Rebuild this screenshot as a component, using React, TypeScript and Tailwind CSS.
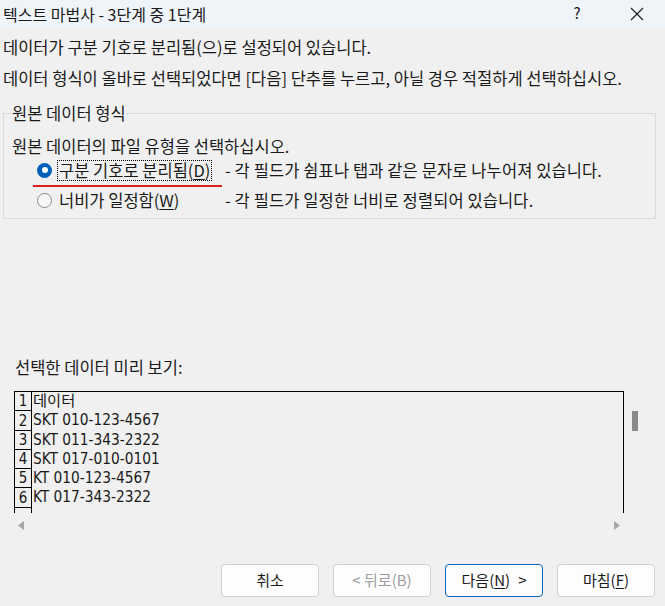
import React from 'react';

const ui = { fontFamily: '"Noto Sans CJK KR", "Noto Sans", sans-serif' };
const mono = { fontFamily: '"DejaVu Sans", "Noto Sans CJK KR", sans-serif' };

const rows = ['데이터', 'SKT 010-123-4567', 'SKT 011-343-2322', 'SKT 017-010-0101', 'KT 010-123-4567', 'KT 017-343-2322'];

function Radio({ checked }: { checked: boolean }) {
    if (checked) {
        return (
            <span className="w-[15px] h-[15px] rounded-full bg-[#005fb8] flex items-center justify-center shrink-0">
                <span className="w-[6px] h-[6px] rounded-full bg-white" />
            </span>
        );
    }
    return <span className="w-[15px] h-[15px] rounded-full border border-[#8a8a8a] bg-[#f7f7f7] shrink-0" />;
}

function Btn({ children, primary, disabled }: { children: React.ReactNode; primary?: boolean; disabled?: boolean }) {
    return (
        <button
            className={
                'w-[98px] h-[33px] rounded-[4px] bg-[#fdfdfd] text-[15px] flex items-center justify-center ' +
                (primary ? 'border border-[#0067c0]' : 'border border-[#d0d0d0]') +
                (disabled ? ' text-[#9d9d9d]' : ' text-[#1a1a1a]')
            }
        >
            {children}
        </button>
    );
}

export default function App() {
    return (
        <div className="w-[665px] h-[606px] bg-[#f0f0f0] flex flex-col text-[#1a1a1a] overflow-hidden" style={ui}>
            {/* title bar */}
            <div className="h-[27px] bg-[#eff4f9] flex items-center pl-[3px] shrink-0">
                <span className="text-[16px] leading-none">텍스트 마법사 - 3단계 중 1단계</span>
                <span className="ml-auto text-[15px] w-[20px] text-center">?</span>
                <span className="ml-[40px] mr-[18px] w-[20px] flex justify-center">
                    <svg width="14" height="14" viewBox="0 0 14 14" fill="none" stroke="#1a1a1a" strokeWidth="1.1">
                        <path d="M1 1 L13 13 M13 1 L1 13" />
                    </svg>
                </span>
            </div>

            <div className="pl-[3px] pt-[10px] text-[16.5px] leading-[20px]">
                데이터가 구분 기호로 분리됨(으)로 설정되어 있습니다.
            </div>
            <div className="pl-[3px] pt-[11px] text-[16.5px] leading-[20px]">
                데이터 형식이 올바로 선택되었다면 [다음] 단추를 누르고, 아닐 경우 적절하게 선택하십시오.
            </div>

            {/* group box */}
            <fieldset className="ml-[3px] mt-[16px] w-[653px] h-[115px] border border-[#dadada] pl-[8px] pr-[8px]">
                <legend className="text-[16.5px] leading-[18px] px-[1px] ml-[-1px]">원본 데이터 형식</legend>
                <div className="pt-[14px] text-[16.5px] leading-[20px]">원본 데이터의 파일 유형을 선택하십시오.</div>
                <div className="mt-[3px] flex items-center h-[22px]">
                    <div className="w-[213px] flex items-center pl-[25px] shrink-0">
                        <Radio checked />
                        <span className="ml-[5px] border border-dotted border-black px-[1px] text-[16.5px] leading-[19px]">
                            구분 기호로 분리됨(<span className="underline underline-offset-2">D</span>)
                        </span>
                    </div>
                    <span className="text-[16.5px] tracking-[0.1px]">- 각 필드가 쉼표나 탭과 같은 문자로 나누어져 있습니다.</span>
                </div>
                <div className="ml-[21px] w-[189px] h-[2px] bg-[#e0201e] mt-[4px]" />
                <div className="mt-[2px] flex items-center h-[22px]">
                    <div className="w-[213px] flex items-center pl-[25px] shrink-0">
                        <Radio checked={false} />
                        <span className="ml-[6px] px-[1px] text-[16.5px] leading-[19px]">
                            너비가 일정함(<span className="underline underline-offset-2">W</span>)
                        </span>
                    </div>
                    <span className="text-[16.5px] tracking-[0.1px]">- 각 필드가 일정한 너비로 정렬되어 있습니다.</span>
                </div>
            </fieldset>

            <div className="pl-[15px] mt-[138px] text-[16.5px] leading-[20px]">선택한 데이터 미리 보기:</div>

            {/* preview */}
            <div className="mt-[14px] ml-[14px] flex">
                <div className="flex flex-col w-[610px]">
                    <div className="h-[122px] border-l border-t border-r border-black bg-[#f0f0f0] overflow-hidden">
                        {rows.concat(['']).map((r, i) => (
                            <div key={i} className="flex h-[19.3px]">
                                <div className="w-[17px] border-r border-b border-black flex items-end justify-center text-[15px] leading-[17px] font-stretch-condensed shrink-0" style={mono}>
                                    {r === '' ? '' : i + 1}
                                </div>
                                <div className="pl-[1px] text-[15.3px] leading-[19px] font-stretch-condensed" style={mono}>{r}</div>
                            </div>
                        ))}
                    </div>
                    <div className="h-[22px] pt-[2px] flex items-center justify-between px-[4px]">
                        <svg width="6" height="9" viewBox="0 0 6 9"><path d="M6 0 L0 4.5 L6 9 Z" fill="#a6a6a6" /></svg>
                        <svg width="6" height="9" viewBox="0 0 6 9"><path d="M0 0 L6 4.5 L0 9 Z" fill="#a6a6a6" /></svg>
                    </div>
                </div>
                <div className="ml-[8px] pt-[20px]">
                    <div className="w-[6px] h-[20px] bg-[#8a8a8a]" />
                </div>
            </div>

            {/* buttons */}
            <div className="mt-[29px] pr-[10px] flex justify-end gap-[14px]">
                <Btn>취소</Btn>
                <Btn disabled>&lt; 뒤로(B)</Btn>
                <Btn primary>
                    다음(<span className="underline underline-offset-2">N</span>)<span className="ml-[8px]">&gt;</span>
                </Btn>
                <Btn>
                    마침(<span className="underline underline-offset-2">F</span>)
                </Btn>
            </div>
        </div>
    );
}
